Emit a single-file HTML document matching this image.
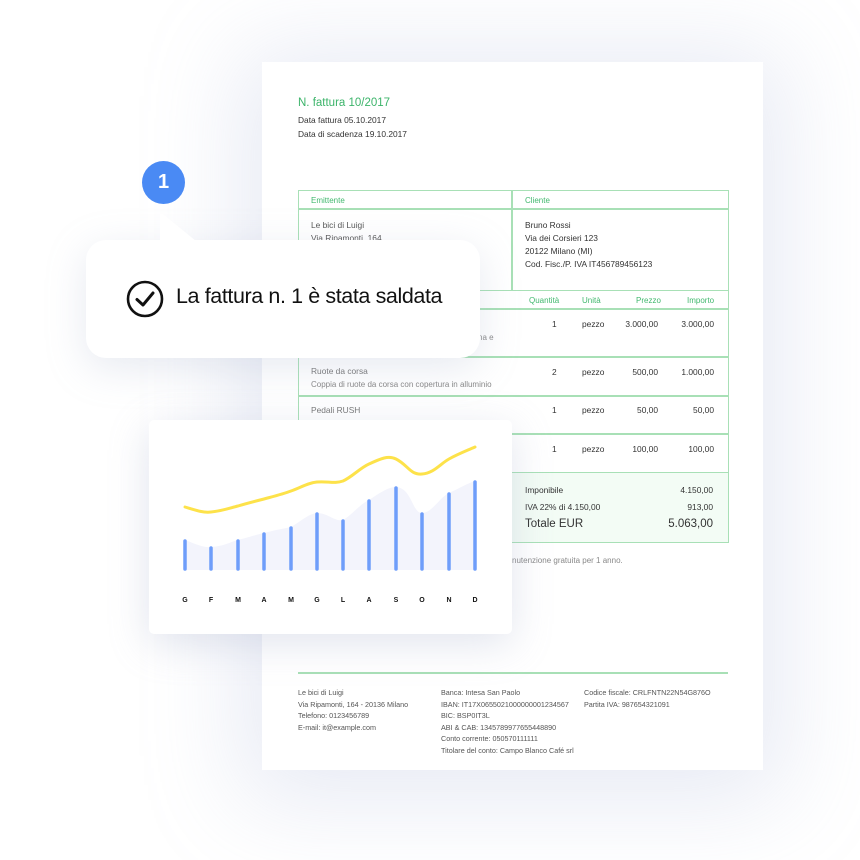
<!DOCTYPE html>
<html><head><meta charset="utf-8"><style>
*{margin:0;padding:0;box-sizing:border-box}
body{width:860px;height:860px;background:#fff;position:relative;overflow:hidden;font-family:"Liberation Sans",sans-serif;color:#333}
.a{position:absolute;white-space:nowrap}
.page{position:absolute;left:262px;top:62px;width:501px;height:708px;background:#fff;box-shadow:0 10px 90px 20px rgba(170,180,215,.28)}
.s{font-size:8.4px;color:#333}
.g{color:#3cb46a}
.gl{color:#42b86e;font-size:8px}
.m{color:#888;font-size:8px}
.bx{position:absolute;border:1.5px solid #a8e0b6}
.r{text-align:right}
</style></head><body>
<div class="page"></div>
<div class="a g" style="left:298px;top:97px;font-size:11.5px">N. fattura 10/2017</div>
<div class="a s" style="left:298px;top:115px">Data fattura 05.10.2017</div>
<div class="a s" style="left:298px;top:129px">Data di scadenza 19.10.2017</div>

<div class="bx" style="left:298px;top:190px;width:431px;height:20px"></div>
<div class="bx" style="left:298px;top:208px;width:431px;height:83px"></div>
<div class="a" style="left:511px;top:190px;width:1.5px;height:100px;background:#a8e0b6"></div>
<div class="a gl" style="left:311px;top:196px">Emittente</div>
<div class="a gl" style="left:525px;top:196px">Cliente</div>
<div class="a s" style="left:311px;top:220px;color:#555">Le bici di Luigi</div>
<div class="a s" style="left:311px;top:233px;color:#555">Via Ripamonti, 164</div>
<div class="a s" style="left:525px;top:219px;line-height:13px">Bruno Rossi<br>Via dei Corsieri 123<br>20122 Milano (MI)<br>Cod. Fisc./P. IVA IT456789456123</div>

<div class="bx" style="left:298px;top:290px;width:431px;height:20px"></div>
<div class="a gl" style="left:529px;top:296px">Quantità</div>
<div class="a gl" style="left:582px;top:296px">Unità</div>
<div class="a gl" style="left:636px;top:296px">Prezzo</div>
<div class="a gl" style="left:687px;top:296px">Importo</div>

<div class="bx" style="left:298px;top:308px;width:431px;height:50px"></div>
<div class="bx" style="left:298px;top:356px;width:431px;height:41px"></div>
<div class="bx" style="left:298px;top:395px;width:431px;height:40px"></div>
<div class="bx" style="left:298px;top:433px;width:431px;height:40px"></div>
<div class="a m" style="left:478px;top:333px">na e</div>
<div class="a s" style="left:311px;top:366px;color:#777">Ruote da corsa</div>
<div class="a m" style="left:311px;top:380px">Coppia di ruote da corsa con copertura in alluminio</div>
<div class="a s" style="left:311px;top:405px;color:#777">Pedali RUSH</div>

<div class="a s" style="left:552px;top:319px">1</div><div class="a s" style="left:582px;top:319px">pezzo</div><div class="a s r" style="left:598px;width:60px;top:319px">3.000,00</div><div class="a s r" style="left:652px;width:62px;top:319px">3.000,00</div>
<div class="a s" style="left:552px;top:367px">2</div><div class="a s" style="left:582px;top:367px">pezzo</div><div class="a s r" style="left:598px;width:60px;top:367px">500,00</div><div class="a s r" style="left:652px;width:62px;top:367px">1.000,00</div>
<div class="a s" style="left:552px;top:405px">1</div><div class="a s" style="left:582px;top:405px">pezzo</div><div class="a s r" style="left:598px;width:60px;top:405px">50,00</div><div class="a s r" style="left:652px;width:62px;top:405px">50,00</div>
<div class="a s" style="left:552px;top:444px">1</div><div class="a s" style="left:582px;top:444px">pezzo</div><div class="a s r" style="left:598px;width:60px;top:444px">100,00</div><div class="a s r" style="left:652px;width:62px;top:444px">100,00</div>

<div class="bx" style="left:511px;top:472px;width:218px;height:71px;background:#f3fcf5"></div>
<div class="a s" style="left:525px;top:485px">Imponibile</div><div class="a s r" style="left:640px;width:73px;top:485px">4.150,00</div>
<div class="a s" style="left:525px;top:502px">IVA 22% di 4.150,00</div><div class="a s r" style="left:640px;width:73px;top:502px">913,00</div>
<div class="a" style="left:525px;top:518px;font-size:11.5px">Totale EUR</div><div class="a r" style="left:620px;width:93px;top:518px;font-size:11.5px">5.063,00</div>
<div class="a m" style="left:512px;top:556px">nutenzione gratuita per 1 anno.</div>

<div class="a" style="left:298px;top:672px;width:430px;height:1.5px;background:#a8e0b6"></div>
<div class="a" style="left:298px;top:687px;font-size:7.2px;line-height:11.5px;color:#555">Le bici di Luigi<br>Via Ripamonti, 164 - 20136 Milano<br>Telefono: 0123456789<br>E-mail: it@example.com</div>
<div class="a" style="left:441px;top:687px;font-size:7.2px;line-height:11.5px;color:#555">Banca: Intesa San Paolo<br>IBAN: IT17X0655021000000001234567<br>BIC: BSP0IT3L<br>ABI &amp; CAB: 1345789977655448890<br>Conto corrente: 050570111111<br>Titolare del conto: Campo Blanco Café srl</div>
<div class="a" style="left:584px;top:687px;font-size:7.2px;line-height:11.5px;color:#555">Codice fiscale: CRLFNTN22N54G876O<br>Partita IVA: 987654321091</div>

<div class="a" style="left:86px;top:240px;width:394px;height:118px;background:#fff;border-radius:20px;box-shadow:0 10px 40px rgba(160,170,200,.25)"></div>
<svg class="a" style="left:150px;top:205px" width="60" height="40"><path d="M10 36 L10 10 Q10 7 13 9 L46 36 Z" fill="#fff"/></svg>
<div class="a" style="left:142px;top:161px;width:43px;height:43px;border-radius:50%;background:#4a8af4;color:#fff;font-weight:bold;font-size:20px;text-align:center;line-height:43px">1</div>
<svg class="a" style="left:125px;top:280px" width="40" height="40"><circle cx="20" cy="19" r="17" fill="none" stroke="#111" stroke-width="2.6"/><path d="M12 19.5 L18 25 L28 13" fill="none" stroke="#111" stroke-width="3" stroke-linecap="round" stroke-linejoin="round"/></svg>
<div class="a" style="left:176px;top:284px;font-size:21.5px;color:#111;letter-spacing:-0.4px">La fattura n. 1 è stata saldata</div>

<div class="a" style="left:149px;top:420px;width:363px;height:214px;background:#fff;border-radius:5px;box-shadow:0 10px 40px rgba(160,170,200,.3)"></div>
<svg class="a" style="left:0;top:0" width="860" height="860">
<path d="M185 540 C198 545 205 548 211 547 C225 546 230 542 238 540 C250 537 255 535 264 533 C275 530 282 529 291 527 C300 522 308 514 317 513 C328 513 335 522 343 520 C352 515 360 504 369 500 C380 493 388 487 396 487 C412 488 412 513 422 513 C432 513 440 497 449 493 C460 488 466 484 475 481 L475 570 L185 570 Z" fill="#f3f4fc"/>
<g stroke="#6e9dfa" stroke-width="3.5" stroke-linecap="round">
<line x1="185" y1="541" x2="185" y2="569"/><line x1="211" y1="548" x2="211" y2="569"/><line x1="238" y1="541" x2="238" y2="569"/><line x1="264" y1="534" x2="264" y2="569"/><line x1="291" y1="528" x2="291" y2="569"/><line x1="317" y1="514" x2="317" y2="569"/><line x1="343" y1="521" x2="343" y2="569"/><line x1="369" y1="501" x2="369" y2="569"/><line x1="396" y1="488" x2="396" y2="569"/><line x1="422" y1="514" x2="422" y2="569"/><line x1="449" y1="494" x2="449" y2="569"/><line x1="475" y1="482" x2="475" y2="569"/>
</g>
<path d="M185 507 C195 510 203 513 211 512 C222 511 230 508 238 506 C248 503 256 501 264 499 C275 496 283 494 291 491 C300 488 307 483 317 482 C328 481 334 484 343 481 C352 477 360 468 369 464 C380 459 388 455 396 459 C408 465 410 475 422 474 C434 473 440 464 449 459 C458 454 466 451 475 447" fill="none" stroke="#fde24a" stroke-width="3" stroke-linecap="round"/>
<g font-family="Liberation Sans" font-weight="bold" font-size="7" fill="#111" text-anchor="middle">
<text x="185" y="602">G</text><text x="211" y="602">F</text><text x="238" y="602">M</text><text x="264" y="602">A</text><text x="291" y="602">M</text><text x="317" y="602">G</text><text x="343" y="602">L</text><text x="369" y="602">A</text><text x="396" y="602">S</text><text x="422" y="602">O</text><text x="449" y="602">N</text><text x="475" y="602">D</text>
</g>
</svg>
</body></html>
